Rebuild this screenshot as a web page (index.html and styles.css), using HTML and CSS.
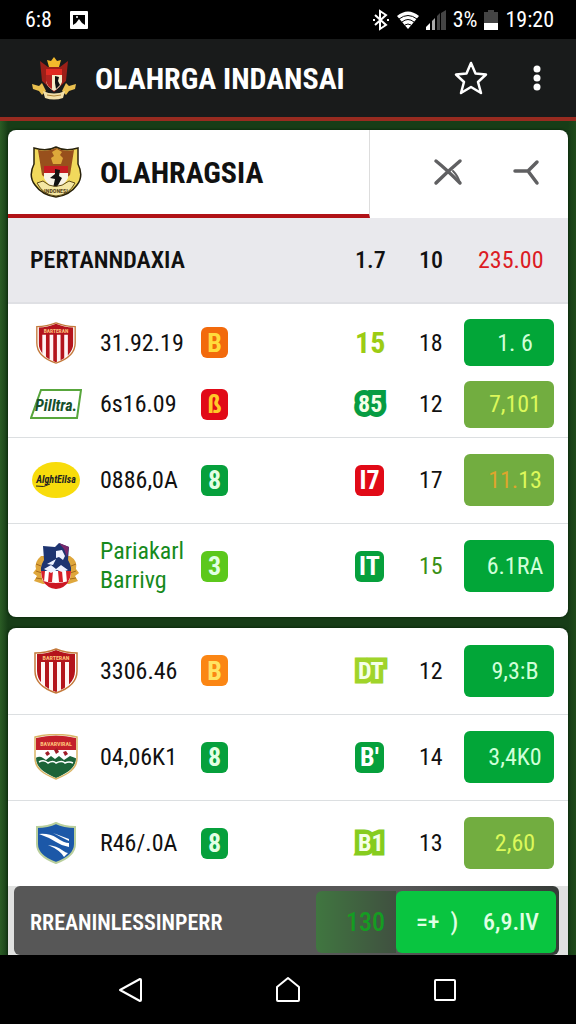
FILE: index.html
```
<!DOCTYPE html>
<html lang="id">
<head>
    <meta charset="UTF-8">
    <meta name="viewport" content="width=device-width, initial-scale=1.0">
    <title>Olahrga Indansai</title>
    <link rel="stylesheet" href="styles.css">
</head>
<body>
    <svg width="0" height="0" class="defs" aria-hidden="true">
        <symbol id="striped-shield" viewBox="0 0 44 46">
            <clipPath id="shield-clip"><path d="M3 6Q13 6 22 2Q31 6 41 6V23C41 33 33 40 22 44C11 40 3 33 3 23Z"/></clipPath>
            <g clip-path="url(#shield-clip)">
                <path fill="#fff4f4" d="M0 0h44v46H0z"/>
                <path fill="#b4141c" d="M0 14h7v32H0zM11 14h4v32h-4zM19 14h4v32h-4zM27 14h4v32h-4zM35 14h9v32h-9zM0 0h44v14H0z"/>
            </g>
            <path fill="none" stroke="#c47a3c" stroke-width="1.5" d="M1 5Q12 5 22 1Q32 5 43 5V23C43 34 34 41 22 45C10 41 1 34 1 23Z"/>
        </symbol>
    </svg>

    <div class="status-bar">
        <div class="status-left">
            <span>6:8</span>
            <svg width="20" height="18" viewBox="0 0 20 18"><rect x="1" width="18" height="18" rx="1" fill="#fff"/><path d="M4 4h12v10l-3-2-3-4-3 4-3 2z" fill="#000"/><circle cx="8" cy="6" r="1" fill="#fff"/></svg>
        </div>
        <div class="status-right">
            <svg width="18" height="22" viewBox="0 0 18 22" fill="none" stroke="#fff" stroke-width="2"><path d="M3 6l11 10-6 4V2l6 4L3 16"/><path d="M1 11h2M15 11h2"/></svg>
            <svg width="22" height="18" viewBox="0 0 22 18"><path d="M0 5Q11-4 22 5L11 18z" fill="#fff"/><path d="M2 8q9-7 18 0M5 11q6-5 12 0M8 14q3-2 6 0" stroke="#000" fill="none"/></svg>
            <svg width="20" height="20" viewBox="0 0 20 20"><path d="M0 20v-3l4-4v7z" fill="#fff"/><path d="M6 20V11l3-3v12z" fill="#aaa"/><path d="M11 20V6l3-3v17zM15 20V3l5-3v20z" fill="#444"/></svg>
            <span>3%</span>
            <svg width="14" height="20" viewBox="0 0 14 20"><path d="M0 2h4V0h6v2h4v12H0z" fill="#444"/><path d="M0 13h14v7H0z" fill="#fff"/></svg>
            <span>19:20</span>
        </div>
    </div>

    <header class="app-bar">
        <svg class="emblem" width="44" height="44" viewBox="0 0 44 44">
            <path d="M8 5l8 6h12l8-6-2 20-12 11L10 25z" fill="#9c2018"/>
            <path d="M22 1l3 4 4-1-2 7H17l-2-7 4 1z" fill="#f2b92c"/>
            <path d="M14 13h16v6H14z" fill="#e22b22"/>
            <path d="M14 19h16v7q-2 6-8 9-6-3-8-9z" fill="#f7edc8"/>
            <path d="M14 19h6v14q-5-3-6-8z" fill="#b32420"/>
            <path d="M23 20l4 1-1 4 2 4-4 4-1-6z" fill="#111"/>
            <path d="M0 28l7 2 3-3 4 8-4 4-3-4-6-2zM44 28l-7 2-3-3-4 8 4 4 3-4 6-2z" fill="#eac04f"/>
            <path d="M11 35q11 5 22 0l-2 7q-9 3-18 0z" fill="#f2dfa8"/>
            <path d="M15 39q7 2 14 0" stroke="#ad8437" fill="none"/>
        </svg>
        <h1>OLAHRGA INDANSAI</h1>
        <button class="icon-btn" aria-label="Favorit">
            <svg width="34" height="34" viewBox="0 0 34 34"><path d="M17 2l4.500 10.500 10.500 1-8 7.500 3 11L17 26 7 32l3-11-8-7.500 10.500-1z" fill="none" stroke="#fff" stroke-width="2.500" stroke-linejoin="round"/></svg>
        </button>
        <button class="icon-btn" aria-label="Menu">
            <svg width="34" height="34" viewBox="0 0 34 34" fill="#fff"><circle cx="17" cy="8" r="3.500"/><circle cx="17" cy="17" r="3.500"/><circle cx="17" cy="26" r="3.500"/></svg>
        </button>
    </header>

    <main>
        <section class="card">
            <div class="tabs">
                <button class="tab">
                    <svg width="52" height="54" viewBox="0 0 52 54">
                        <path d="M4 3q13 4 22-1 9 5 22 1v16q6 12-1 21-7 10-21 12Q12 50 5 40-2 31 4 19z" fill="#f1d95c" stroke="#29220c" stroke-width="1.500"/>
                        <path d="M8 5q10 2 18-2 8 4 18 2l-4 25-14 12-14-12z" fill="#98501c"/>
                        <path d="M22 7l5-3 5 3-2 3 3 3-2 6h-8l-2-6 3-2z" fill="#dda83a"/>
                        <path d="M14 21h24v7H14z" fill="#c61c22"/>
                        <path d="M14 28h24v5q-3 7-12 10-9-3-12-10z" fill="#f8f3e6"/>
                        <path d="M25 24l5 1-1 6 3 2-5 9-4 1 2-9-5-1 5-4z" fill="#111"/>
                        <path d="M7 38l6-2q12 11 26 0l6 2q-6 12-19 13Q13 50 7 38z" fill="#f4e7a3" stroke="#5f4b18"/>
                        <text x="26" y="48" text-anchor="middle" class="crest-text" fill="#5a4619">INDONESI</text>
                    </svg>
                    <span>OLAHRAGSIA</span>
                </button>
                <div class="tab-actions">
                    <button class="icon-btn" aria-label="Tutup">
                        <svg width="30" height="28" viewBox="0 0 30 28" stroke="#606062" stroke-width="3.500" stroke-linecap="round" fill="none"><path d="M3 3q10 8 24 22M27 3Q14 14 3 25"/><path d="M20 13q5 5 7 12" stroke-width="2"/></svg>
                    </button>
                    <button class="icon-btn" aria-label="Bagikan">
                        <svg width="30" height="28" viewBox="0 0 30 28" stroke="#606062" stroke-width="3.500" stroke-linecap="round" fill="none"><path d="M4 13h13L26 4M17 13l9 12"/></svg>
                    </button>
                </div>
            </div>
            <table>
                <colgroup><col class="c-logo"><col class="c-name"><col><col class="c-mark"><col class="c-num"><col class="c-odds"></colgroup>
                <thead>
                    <tr>
                        <th colspan="3" class="title">PERTANNDAXIA</th>
                        <th>1.7</th>
                        <th>10</th>
                        <th class="total">235.00</th>
                    </tr>
                </thead>
                <tbody>
                    <tr class="pair-top">
                        <td class="logo"><svg width="44" height="42" viewBox="0 0 44 46"><use href="#striped-shield" width="44" height="46"/><text x="22" y="12" text-anchor="middle" class="crest-text" fill="#ffc27a">BARTERAN</text></svg></td>
                        <td>31.92.19</td>
                        <td><span class="badge orange">B</span></td>
                        <td><span class="big lime">15</span></td>
                        <td>18</td>
                        <td><button class="odds">1. 6</button></td>
                    </tr>
                    <tr class="pair-bottom">
                        <td class="logo">
                            <svg width="52" height="30" viewBox="0 0 52 30"><path d="M11 1h40l-4 28H1z" fill="#fff" stroke="#58a63c" stroke-width="2"/><text x="26" y="22" text-anchor="middle" class="brand" fill="#164f2c">Pilltra.</text></svg>
                        </td>
                        <td>6s16.09</td>
                        <td><span class="badge red">ß</span></td>
                        <td><span class="outlined green-line">85</span></td>
                        <td>12</td>
                        <td><button class="odds olive">7,101</button></td>
                    </tr>
                    <tr>
                        <td class="logo">
                            <svg width="50" height="38" viewBox="0 0 50 38"><ellipse cx="25" cy="19" rx="24" ry="18" fill="#f8dc0b"/><path d="M5 25q8 2 14-2" stroke="#222" fill="none"/><text x="25" y="22" text-anchor="middle" class="oval-text" fill="#222">AlghtEilsa</text></svg>
                        </td>
                        <td>0886,0A</td>
                        <td><span class="badge green">8</span></td>
                        <td><span class="badge red white">I7</span></td>
                        <td>17</td>
                        <td><button class="odds olive tall"><span class="amber">11.</span>13</button></td>
                    </tr>
                    <tr>
                        <td class="logo">
                            <svg width="48" height="48" viewBox="0 0 48 48">
                                <path d="M9 14q-7 6-5 13l-3 4 4 3-3 5 9 3h26l9-3-3-5 4-3-3-4q2-8-6-13z" fill="#dfa73c"/>
                                <path d="M4 22l5 2M4 29l6 2M4 36l6 1M44 22l-5 2M44 29l-6 2M44 36l-6 1" stroke="#a66a1c"/>
                                <path d="M11 4l12 1 4-4 10 4-1 13q5 8 2 15H10q-3-7 2-15z" fill="#1d3470"/>
                                <path d="M27 1l10 4-2 10-3-8z" fill="#78286a"/>
                                <path d="M9 29h30q0 16-15 18Q9 45 9 29z" fill="#fff"/>
                                <path d="M9 29h4l-1 11q-3-5-3-11zM17 29h4l-1 11h-4zM26 29h4l1 11h-4zM34 29h5q0 7-4 12z" fill="#d61f2a"/>
                                <path d="M11 39q13 4 26 0-4 7-13 8-9-1-13-8z" fill="#cc1824"/>
                                <path d="M24 9l6-1 3 6-2 4-4-3-3 1zM15 22l9-5-3 6zM12 27l7-4 5 4 5-4 7 5-6 2-5-2-6 3z" fill="#eef2ff"/>
                            </svg>
                        </td>
                        <td class="team">Pariakarl<br>Barrivg</td>
                        <td><span class="badge light-green">3</span></td>
                        <td><span class="badge green white">IT</span></td>
                        <td class="green-num">15</td>
                        <td><button class="odds tall">6.1RA</button></td>
                    </tr>
                </tbody>
            </table>
        </section>

        <section class="card card-last">
            <table>
                <colgroup><col class="c-logo"><col class="c-name"><col><col class="c-mark"><col class="c-num"><col class="c-odds"></colgroup>
                <tbody>
                    <tr>
                        <td class="logo"><svg width="44" height="46" viewBox="0 0 44 46"><use href="#striped-shield" width="44" height="46"/><text x="22" y="12" text-anchor="middle" class="crest-text" fill="#ffc27a">BARTERAN</text></svg></td>
                        <td>3306.46</td>
                        <td><span class="badge amber-bg">B</span></td>
                        <td><span class="outlined lime-line">DT</span></td>
                        <td>12</td>
                        <td><button class="odds tall">9,3:B</button></td>
                    </tr>
                    <tr>
                        <td class="logo">
                            <svg width="44" height="46" viewBox="0 0 44 46">
                                <clipPath id="hill-clip"><path d="M2 4Q22-1 42 4V24C42 34 33 39 22 44 11 39 2 34 2 24Z"/></clipPath>
                                <g clip-path="url(#hill-clip)">
                                    <path fill="#fff" d="M0 0h44v46H0z"/>
                                    <path fill="#c3202b" d="M0 0h44v16H0z"/>
                                    <path fill="#1d6438" d="M0 25q5-4 9-1l3 2 5-4 4 3 4-3 5 4 6-4 8 3v21H0z"/>
                                    <path d="M5 28q5-3 9 1 5-3 8 0 6-3 9 0 4-2 8 0" stroke="#fff" stroke-width="1.500" fill="none"/>
                                    <path fill="#9f1d28" d="M11 19l3-2 2 3-3 2zM20 16l3-2 2 4-3 2zM29 18l3-1 2 3-3 2z"/>
                                </g>
                                <path d="M1 3Q22-2 43 3V24C43 35 34 40 22 45 10 40 1 35 1 24Z" fill="none" stroke="#d9b566" stroke-width="1.500"/>
                                <text x="22" y="12" text-anchor="middle" class="crest-text" fill="#ffc27a">BAVARVIRAL</text>
                            </svg>
                        </td>
                        <td>04,06K1</td>
                        <td><span class="badge green">8</span></td>
                        <td><span class="badge green white">B'</span></td>
                        <td>14</td>
                        <td><button class="odds tall">3,4K0</button></td>
                    </tr>
                    <tr>
                        <td class="logo">
                            <svg width="42" height="44" viewBox="0 0 42 44"><path d="M2 6Q13 6 21 2q8 4 19 4v17c0 9-8 15-19 19C10 38 2 32 2 23z" fill="#1c58a8" stroke="#b9cf9c" stroke-width="2"/><path d="M4 13q10-1 18 4 7 5 12 5v4q-7-1-13-5-8-5-17-8zM13 24q9 1 14 5 4 3 6 3l-4 4q-4-7-16-12zM18 12l16 6v2z" fill="#fff"/></svg>
                        </td>
                        <td>R46/.0A</td>
                        <td><span class="badge green">8</span></td>
                        <td><span class="outlined bright-line">B1</span></td>
                        <td>13</td>
                        <td><button class="odds olive tall">2,60</button></td>
                    </tr>
                </tbody>
            </table>
            <div class="slip">
                <div class="slip-bar">
                    <span class="slip-title">RREANINLESSINPERR</span>
                    <span class="slip-count">130</span>
                    <button class="slip-btn"><span>=+&nbsp; )</span><span>6,9.IV</span></button>
                </div>
            </div>
        </section>
    </main>

    <nav class="nav-bar">
        <button class="icon-btn" aria-label="Kembali"><svg width="26" height="28" viewBox="0 0 26 28"><path d="M2 14L22 3q1 0 1 1v20q0 1-1 1z" fill="none" stroke="#fff" stroke-width="2" stroke-linejoin="round"/></svg></button>
        <button class="icon-btn" aria-label="Beranda"><svg width="26" height="28" viewBox="0 0 26 28"><path d="M13 2l11 9v13q0 1-1 1H3q-1 0-1-1V11z" fill="none" stroke="#fff" stroke-width="2" stroke-linejoin="round"/></svg></button>
        <button class="icon-btn" aria-label="Terbaru"><svg width="26" height="28" viewBox="0 0 26 28"><rect x="3" y="4" width="20" height="20" rx="1" fill="none" stroke="#fff" stroke-width="2"/></svg></button>
    </nav>
</body>
</html>
```
FILE: styles.css
```
* {
    box-sizing: border-box;
}

body {
    margin: 0;
    min-height: 100vh;
    display: flex;
    flex-direction: column;
    background-color: #000;
    color: #111;
    font-family: "Roboto Condensed", "Liberation Sans Narrow", Roboto, sans-serif;
    font-size: 24px;
}

button {
    font: inherit;
    color: inherit;
    border: none;
    background: none;
    padding: 0;
    cursor: pointer;
}

svg {
    display: block;
}

.defs {
    position: absolute;
}

/* Status bar */
.status-bar {
    display: flex;
    justify-content: space-between;
    align-items: center;
    height: 39px;
    padding: 0 22px 0 25px;
    background-color: #000;
    color: #fff;
    font-size: 22px;
}

.status-left,
.status-right {
    display: flex;
    align-items: center;
}

.status-left {
    gap: 17px;
}

.status-right {
    gap: 7px;
}

/* App bar */
.app-bar {
    display: flex;
    align-items: center;
    height: 82px;
    padding: 0 22px 0 32px;
    background-color: #191b1b;
    border-bottom: 4px solid #982b20;
    color: #fff;
}

.app-bar h1 {
    flex: 1;
    margin: 0 0 0 19px;
    font-size: 30px;
    font-weight: bold;
    white-space: nowrap;
}

.app-bar .icon-btn + .icon-btn {
    margin-left: 32px;
}

/* Cards */
main {
    flex: 1;
    display: flex;
    flex-direction: column;
    gap: 11px;
    padding: 9px 8px 0;
    background: linear-gradient(90deg, #2b5c25, #173d17 8px, #173d17 calc(100% - 8px), #1f4a1a);
}

.card {
    background-color: #fff;
    border-radius: 8px;
    padding-bottom: 8px;
    overflow: hidden;
    box-shadow: 0 0 3px #041a04;
}

.card-last {
    flex: 1;
    padding-bottom: 0;
    border-radius: 8px 8px 0 0;
}

.tabs {
    display: flex;
    height: 88px;
}

.tab {
    display: flex;
    align-items: center;
    flex: 1;
    gap: 18px;
    padding: 0 0 0 22px;
    border-right: 1px solid #ddd;
    border-bottom: 4px solid #b11217;
    font-size: 30px;
    font-weight: bold;
}

.tab-actions {
    display: flex;
    align-items: center;
    gap: 48px;
    padding: 0 27px 4px 63px;
}

/* Tables */
table {
    width: 100%;
    border-collapse: collapse;
    table-layout: fixed;
}

.c-logo {
    width: 92px;
}

.c-name {
    width: 101px;
}

.c-mark {
    width: 64px;
}

.c-num {
    width: 45px;
}

.c-odds {
    width: 104px;
}

th,
td {
    padding: 0;
    text-align: left;
    white-space: nowrap;
}

th {
    height: 85px;
    background-color: #e9e9ed;
    border-bottom: 2px solid #dfe0e4;
    font-weight: 500;
}

.title {
    padding-left: 22px;
    font-weight: 600;
}

.total {
    padding-left: 14px;
    color: #dc1c24;
    font-weight: normal;
}

td {
    height: 86px;
}

tbody tr + tr td {
    border-top: 1px solid #dcdfe1;
}

.pair-top td {
    height: 70px;
    padding-top: 8px;
}

tbody .pair-bottom td {
    height: 64px;
    padding-bottom: 1px;
    border-top: none;
}

td.logo {
    padding-left: 22px;
    padding-right: 18px;
}

.logo svg {
    margin: 0 auto;
}

.team {
    color: #168a1c;
    line-height: 29px;
}

.green-num {
    color: #399016;
}

.badge {
    display: flex;
    align-items: center;
    justify-content: center;
    width: 27px;
    height: 31px;
    border-radius: 6px;
    font-size: 26px;
    font-weight: bold;
    color: #e2ffe4;
}

.orange {
    background-color: #f26a0c;
    color: #ffdc3c;
}

.amber-bg {
    background-color: #fb8614;
    color: #ffe463;
}

.red {
    background-color: #e10a17;
    color: #ffc928;
}

.green {
    background-color: #06a03c;
}

.light-green {
    background-color: #5cc81c;
}

.white {
    color: #fff;
    width: 29px;
}

.big {
    font-size: 30px;
    font-weight: bold;
}

.lime {
    color: #9ccc14;
}

/* Letters that carry a thick coloured outline in place of a box */
.outlined {
    padding-left: 3px;
    color: #f4ffe8;
    font-weight: bold;
    paint-order: stroke fill;
    stroke-linejoin: round;
}

.green-line {
    -webkit-text-stroke: 10px #069c42;
}

.lime-line {
    -webkit-text-stroke: 9px #a0d42a;
}

.bright-line {
    -webkit-text-stroke: 9px #86cc1e;
}

/* Odds buttons */
.odds {
    display: block;
    width: 90px;
    height: 47px;
    padding-left: 12px;
    border-radius: 6px;
    background-color: #02a638;
    color: #d0ffd8;
    text-align: center;
}

.tall {
    height: 52px;
}

.olive {
    background-color: #72ad40;
    color: #dcf85a;
}

.amber {
    color: #dda52c;
}

/* Bet slip */
.slip {
    padding: 0 9px 0 6px;
    background-color: #e0e1e0;
}

.slip-bar {
    display: flex;
    align-items: center;
    height: 69px;
    padding: 5px 3px 2px 16px;
    border-radius: 6px;
    background: linear-gradient(90deg, #575757 70%, #363c38);
    color: #fff;
}

.slip-title {
    flex: 1;
    font-size: 22px;
    font-weight: 600;
}

.slip-count {
    width: 80px;
    height: 62px;
    padding-right: 11px;
    border-radius: 6px 0 0 6px;
    background: linear-gradient(90deg, #407640, #405040);
    color: #159c22;
    font-size: 26px;
    line-height: 62px;
    text-align: right;
    font-weight: 500;
}

.slip-btn {
    display: flex;
    justify-content: space-between;
    align-items: center;
    width: 160px;
    height: 62px;
    padding: 0 17px 0 20px;
    border-radius: 6px;
    background-color: #09c540;
    color: #e0ffe4;
    font-weight: 500;
}

/* Navigation */
.nav-bar {
    display: flex;
    justify-content: space-between;
    align-items: center;
    height: 69px;
    padding: 0 118px;
    background-color: #000;
}

.crest-text {
    font-size: 6px;
    font-weight: bold;
}

.brand {
    font-size: 16px;
    font-weight: bold;
    font-style: italic;
}

.oval-text {
    font-size: 10px;
    font-weight: bold;
    font-style: italic;
}
```
